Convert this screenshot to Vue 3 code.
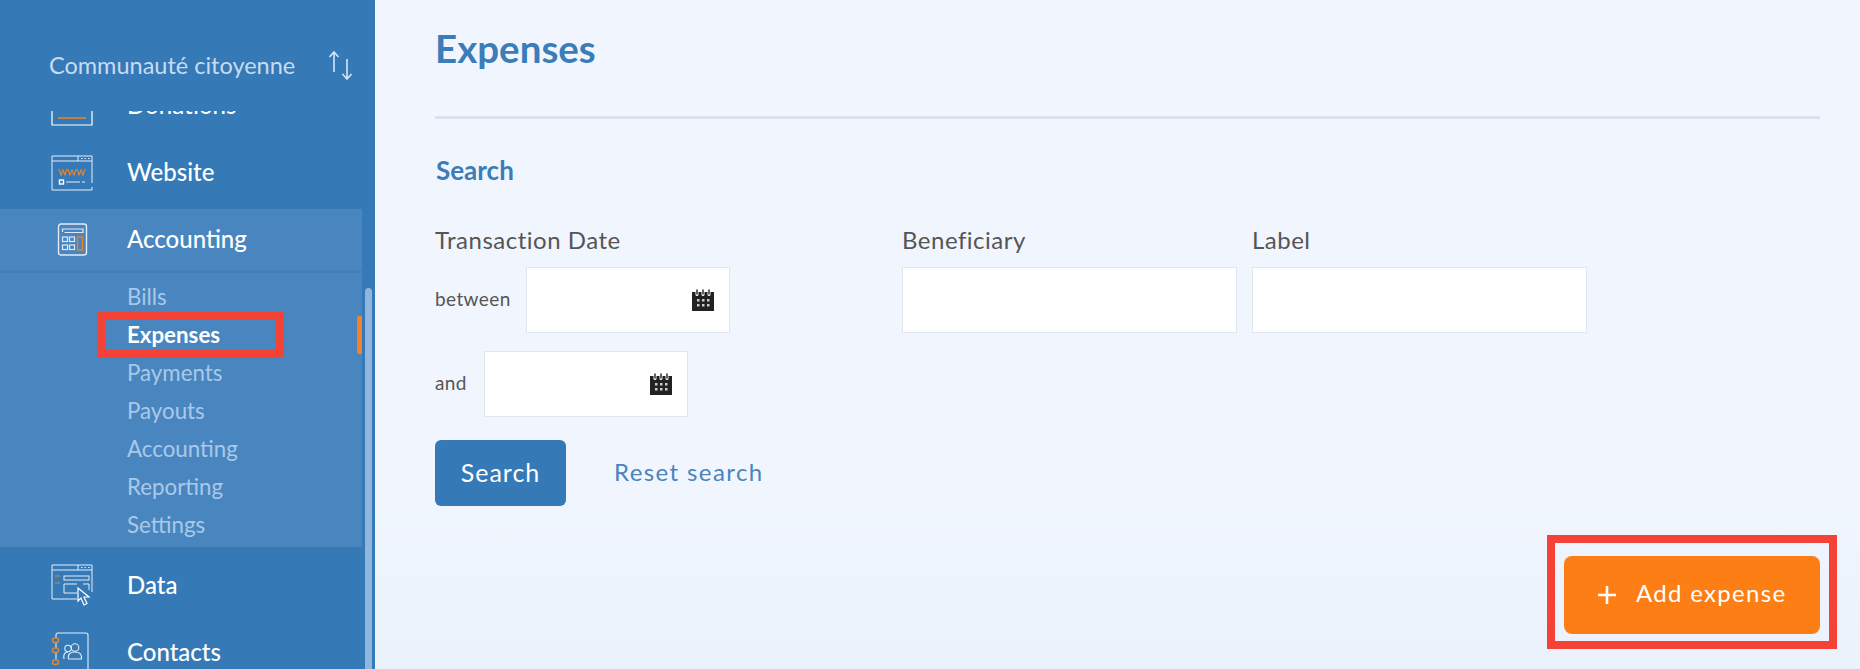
<template>
  <div class="page">
    <aside class="sidebar">
      <div class="org">
        <span>Communauté citoyenne</span>
        <svg class="swap" viewBox="0 0 24 30" width="24" height="30" fill="none" stroke="#d5e5f5" stroke-width="1.6">
          <path d="M5 22V2M0.500 7L5 2l4.500 5" />
          <path d="M18 9v20M13.500 24l4.500 5 4.500-5" />
        </svg>
      </div>

      <nav class="nav">
        <a class="item donations">
          <svg class="icon" viewBox="0 0 42 40" width="42" height="40" fill="none">
            <path d="M1 20v19h40V20" stroke="#fff" stroke-width="1.2" />
            <path d="M7 32h28" stroke="#e8832a" stroke-width="1.6" />
          </svg>
          <span>Donations</span>
        </a>

        <a class="item">
          <svg class="icon" viewBox="0 0 42 36" width="42" height="36" fill="none">
            <path d="M41 28V1H1v34h40v-3M1 6h40M27 1v5" stroke="#e3eef9" stroke-width="1" />
            <path d="M30 3.500h1.500M33.500 3.500H35M37 3.500h1.500" stroke="#e3eef9" stroke-width="1.200" />
            <path d="M8 14l2 6 2-5 2 5 2-6M17 14l2 6 2-5 2 5 2-6M26 14l2 6 2-5 2 5 2-6" stroke="#e8832a" stroke-width="1.200" />
            <rect x="8.500" y="25" width="4" height="4" stroke="#fff" stroke-width="1.400" />
            <path d="M15 27h14M31 27h3" stroke="#e3eef9" stroke-width="1.200" />
          </svg>
          <span>Website</span>
        </a>

        <div class="group">
          <a class="item head">
            <svg class="icon" viewBox="0 0 42 34" width="42" height="34" fill="none">
              <rect x="7.500" y="1" width="28" height="31" rx="2.500" stroke="#dfeaf6" stroke-width="1.400" />
              <path d="M11.500 9V6h20.500v3.500H13.500" stroke="#dfeaf6" stroke-width="1.200" />
              <g stroke="#dfeaf6" stroke-width="1.200">
                <rect x="11.500" y="14" width="5" height="4.500" />
                <rect x="18.500" y="14" width="5" height="4.500" />
                <rect x="11.500" y="22" width="5" height="4.500" />
                <rect x="18.500" y="22" width="5" height="4.500" />
              </g>
              <rect x="26.500" y="14" width="5" height="13" stroke="#e8832a" stroke-width="1.400" />
            </svg>
            <span>Accounting</span>
          </a>
          <div class="subs">
            <a v-for="link in links" :key="link" class="sub" :class="{ current: link === 'Expenses' }">{{ link }}</a>
          </div>
        </div>

        <a class="item lower">
          <svg class="icon" viewBox="0 0 42 42" width="42" height="42" fill="none">
            <path d="M41 28V1H1v34h25M1 6h40M27 1v5" stroke="#e3eef9" stroke-width="1" />
            <path d="M30 3.500h1.500M33.500 3.500H35M37 3.500h1.500" stroke="#e3eef9" stroke-width="1.200" />
            <path d="M4 12h5M4 19h5" stroke="#e8832a" stroke-width="1.200" />
            <rect x="13" y="12" width="25" height="4" stroke="#e3eef9" stroke-width="1" />
            <path d="M26 20H13v9h13M32 20h6v6" stroke="#e3eef9" stroke-width="1" />
            <path d="M27 24v13l3-3 3 7 3-1.500-3-6.500h5z" stroke="#fff" stroke-width="1.200" fill="#357ab7" />
          </svg>
          <span>Data</span>
        </a>

        <a class="item lower">
          <svg class="icon" viewBox="0 0 42 40" width="42" height="40" fill="none">
            <path d="M5 6V3a2 2 0 0 1 2-2h28a2 2 0 0 1 2 2v37M5 11v5M5 21v7" stroke="#e3eef9" stroke-width="1.100" />
            <g stroke="#d9873f" stroke-width="1.500">
              <rect x="1.500" y="6" width="6" height="4.500" rx="2.200" />
              <rect x="1.500" y="16" width="6" height="4.500" rx="2.200" />
              <rect x="1.500" y="28" width="6" height="4.500" rx="2.200" />
            </g>
            <g stroke="#e3eef9" stroke-width="1.100">
              <circle cx="17" cy="16.500" r="3.200" />
              <circle cx="24" cy="15.500" r="3.800" />
              <path d="M13 27c-1-5 1-7 4-7M17.500 27c-1-5 2-7 6.500-7s7 2 6.500 7z" />
            </g>
          </svg>
          <span>Contacts</span>
        </a>
      </nav>

      <div class="scrollbar"></div>
    </aside>

    <main class="content">
      <h1>Expenses</h1>
      <hr />
      <h2>Search</h2>

      <div class="filters">
        <div class="dates">
          <label class="field-label">Transaction Date</label>
          <div class="date-row">
            <span>between</span>
            <div class="input date">
              <svg viewBox="0 0 24 24" width="24" height="24"><use href="#cal" /></svg>
            </div>
          </div>
          <div class="date-row second">
            <span>and</span>
            <div class="input date">
              <svg viewBox="0 0 24 24" width="24" height="24"><use href="#cal" /></svg>
            </div>
          </div>
        </div>
        <div class="col">
          <label class="field-label">Beneficiary</label>
          <div class="input wide"></div>
        </div>
        <div class="col">
          <label class="field-label">Label</label>
          <div class="input wide"></div>
        </div>
      </div>

      <div class="actions">
        <button class="search-btn">Search</button>
        <a class="reset">Reset search</a>
      </div>

      <div class="add-row">
        <div class="add-frame">
          <button class="add-btn">
            <svg class="plus" viewBox="0 0 20 20" width="20" height="20" fill="none" stroke="#fff" stroke-width="2.600">
              <path d="M10 1v18M1 10h18" />
            </svg>
            Add expense
          </button>
        </div>
      </div>

      <svg class="defs" width="0" height="0">
        <symbol id="cal" viewBox="0 0 24 24">
          <path d="M1 4h3.500v2.500a1.500 1.500 0 0 0 3 0V4h3v2.500a1.500 1.500 0 0 0 3 0V4h3v2.500a1.500 1.500 0 0 0 3 0V4H23v19H1z" fill="#222" />
          <path d="M6 1.500v5M12 1.500v5M18 1.500v5" stroke="#222" stroke-width="1.400" />
          <g fill="#ccc">
            <rect x="6" y="11" width="2.500" height="2.500" />
            <rect x="11" y="11" width="2.500" height="2.500" />
            <rect x="16" y="11" width="2.500" height="2.500" />
            <rect x="6" y="16" width="2.500" height="2.500" />
            <rect x="11" y="16" width="2.500" height="2.500" />
            <rect x="16" y="16" width="2.500" height="2.500" />
          </g>
        </symbol>
      </svg>
    </main>
  </div>
</template>

<script setup>
const links = ['Bills', 'Expenses', 'Payments', 'Payouts', 'Accounting', 'Reporting', 'Settings']
</script>

<style>
html, body {
  margin: 0;
  height: 100%;
  overflow: hidden;
}
</style>

<style scoped>
.page {
  display: flex;
  height: 669px;
  font-family: Lato, "Open Sans", sans-serif;
  overflow: hidden;
}
.sidebar {
  position: relative;
  width: 375px;
  flex-shrink: 0;
  background: #357ab7;
  display: flex;
  flex-direction: column;
}
.org {
  height: 111px;
  flex-shrink: 0;
  box-sizing: border-box;
  padding: 50px 22px 0 49px;
  display: flex;
  justify-content: space-between;
  align-items: flex-start;
  color: #c7dcf1;
  font-size: 23.500px;
  line-height: 30px;
}
.nav {
  flex: 1;
  overflow: hidden;
}
.item {
  display: flex;
  align-items: center;
  gap: 34px;
  height: 67px;
  padding-left: 51px;
  color: #fff;
  font-size: 24px;
  font-weight: 500;
}
.item span {
  margin-bottom: 2px;
}
.item.lower span {
  margin-bottom: 0;
}
.icon {
  flex-shrink: 0;
}
.donations {
  margin-top: -39px;
}
.group {
  width: 362px;
  margin-top: 3px;
  margin-bottom: 4px;
  background: #4986c0;
}
.head {
  height: 61px;
  border-bottom: 3px solid #4280bb;
}
.subs {
  padding: 5px 0 3px;
}
.sub {
  position: relative;
  display: block;
  height: 38px;
  line-height: 37px;
  padding-left: 127px;
  color: #a9c9e8;
  font-size: 22.300px;
}
.sub.current {
  color: #fff;
  font-weight: 700;
}
.sub.current::before {
  content: "";
  position: absolute;
  left: 98px;
  top: -4px;
  width: 186px;
  height: 46px;
  box-sizing: border-box;
  border: 8px solid #f44336;
}
.sub.current::after {
  content: "";
  position: absolute;
  right: 0;
  top: 0;
  width: 5px;
  height: 38px;
  background: #f5822a;
  border-radius: 2px 0 0 2px;
}
.scrollbar {
  position: absolute;
  left: 365px;
  top: 288px;
  bottom: 0;
  width: 7px;
  border-radius: 4px 4px 0 0;
  background: #8fb6de;
}
.content {
  flex: 1;
  box-sizing: border-box;
  padding: 0 40px 0 60px;
  background: linear-gradient(#f1f6fe 70%, #ebf2fc);
  color: #555;
}
h1 {
  margin: 0;
  padding-top: 26px;
  font-size: 38.500px;
  line-height: 44px;
  font-weight: 700;
  color: #3a7db9;
}
hr {
  margin: 46px 0 0;
  height: 3px;
  border: 0;
  background: #dbe2ef;
}
h2 {
  margin: 36px 0 0 1px;
  font-size: 26px;
  line-height: 30px;
  font-weight: 700;
  color: #3a7db9;
}
.filters {
  display: flex;
  margin-top: 41px;
}
.dates {
  width: 467px;
}
.col {
  margin-right: 15px;
}
.field-label {
  display: block;
  font-size: 24px;
  line-height: 28px;
  margin-bottom: 13px;
  letter-spacing: 0.5px;
}
.date-row {
  display: flex;
  align-items: center;
  gap: 15px;
  margin-bottom: 18px;
  font-size: 19px;
  letter-spacing: 0.4px;
}
.date-row.second {
  gap: 17px;
}
.date-row span {
  margin-bottom: 3px;
}
.input {
  box-sizing: border-box;
  height: 66px;
  background: #fff;
  border: 1px solid #e1e7f0;
}
.date {
  width: 204px;
  display: flex;
  align-items: center;
  justify-content: flex-end;
  padding-right: 14px;
}
.wide {
  width: 335px;
}
.actions {
  display: flex;
  align-items: center;
  gap: 48px;
  margin-top: 5px;
}
.search-btn {
  width: 131px;
  height: 66px;
  padding: 0 0 3px;
  border: 0;
  border-radius: 6px;
  background: #357ab7;
  color: #fff;
  font: inherit;
  font-size: 25px;
  letter-spacing: 1px;
}
.reset {
  color: #4a84bb;
  font-size: 24px;
  letter-spacing: 1.400px;
  margin-bottom: 3px;
}
.add-row {
  display: flex;
  justify-content: flex-end;
  margin: 29px -17px 0 0;
}
.add-frame {
  box-sizing: border-box;
  width: 290px;
  height: 114px;
  padding: 13px 9px;
  border: 8px solid #f44336;
}
.add-btn {
  display: flex;
  align-items: center;
  width: 256px;
  height: 78px;
  padding: 0 0 6px 33px;
  border: 0;
  border-radius: 8px;
  background: #fd7e14;
  color: #fff;
  font: inherit;
  font-size: 24px;
  letter-spacing: 1.300px;
  white-space: nowrap;
}
.plus {
  margin: 6px 19px 0 0;
}
.defs {
  position: absolute;
}
</style>
